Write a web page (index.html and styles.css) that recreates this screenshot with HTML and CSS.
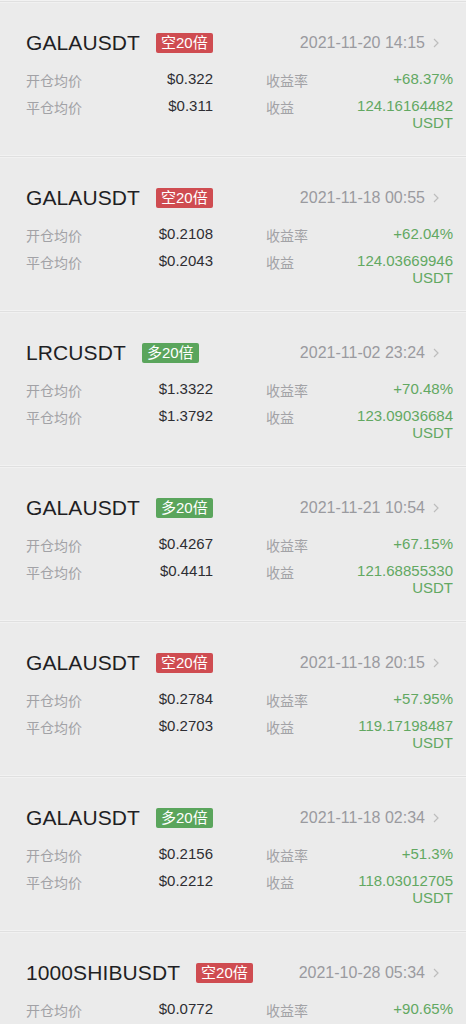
FILE: index.html
```html
<!DOCTYPE html>
<html lang="zh">
<head>
<meta charset="utf-8">
<title>订单记录</title>
<link rel="stylesheet" href="styles.css">
</head>
<body>
<div class="list">

  <div class="card">
    <div class="divider"></div>
    <div class="body">
      <div class="head">
        <span class="sym">GALAUSDT</span>
        <span class="badge short">空20倍</span>
        <span class="date">2021-11-20 14:15</span>
        <svg class="chev" width="6" height="10" viewBox="0 0 6 10"><polyline points="1,1 5,5 1,9" fill="none" stroke="#bdbdbd" stroke-width="1.2"/></svg>
      </div>
      <div class="stats">
        <div class="pair"><span class="lbl">开仓均价</span><span class="val">$0.322</span></div>
        <div class="pair"><span class="lbl">收益率</span><span class="val green">+68.37%</span></div>
        <div class="pair"><span class="lbl">平仓均价</span><span class="val">$0.311</span></div>
        <div class="pair"><span class="lbl">收益</span><span class="val green">124.16164482<br>USDT</span></div>
      </div>
    </div>
  </div>

  <div class="card">
    <div class="divider"></div>
    <div class="body">
      <div class="head">
        <span class="sym">GALAUSDT</span>
        <span class="badge short">空20倍</span>
        <span class="date">2021-11-18 00:55</span>
        <svg class="chev" width="6" height="10" viewBox="0 0 6 10"><polyline points="1,1 5,5 1,9" fill="none" stroke="#bdbdbd" stroke-width="1.2"/></svg>
      </div>
      <div class="stats">
        <div class="pair"><span class="lbl">开仓均价</span><span class="val">$0.2108</span></div>
        <div class="pair"><span class="lbl">收益率</span><span class="val green">+62.04%</span></div>
        <div class="pair"><span class="lbl">平仓均价</span><span class="val">$0.2043</span></div>
        <div class="pair"><span class="lbl">收益</span><span class="val green">124.03669946<br>USDT</span></div>
      </div>
    </div>
  </div>

  <div class="card">
    <div class="divider"></div>
    <div class="body">
      <div class="head">
        <span class="sym">LRCUSDT</span>
        <span class="badge long">多20倍</span>
        <span class="date">2021-11-02 23:24</span>
        <svg class="chev" width="6" height="10" viewBox="0 0 6 10"><polyline points="1,1 5,5 1,9" fill="none" stroke="#bdbdbd" stroke-width="1.2"/></svg>
      </div>
      <div class="stats">
        <div class="pair"><span class="lbl">开仓均价</span><span class="val">$1.3322</span></div>
        <div class="pair"><span class="lbl">收益率</span><span class="val green">+70.48%</span></div>
        <div class="pair"><span class="lbl">平仓均价</span><span class="val">$1.3792</span></div>
        <div class="pair"><span class="lbl">收益</span><span class="val green">123.09036684<br>USDT</span></div>
      </div>
    </div>
  </div>

  <div class="card">
    <div class="divider"></div>
    <div class="body">
      <div class="head">
        <span class="sym">GALAUSDT</span>
        <span class="badge long">多20倍</span>
        <span class="date">2021-11-21 10:54</span>
        <svg class="chev" width="6" height="10" viewBox="0 0 6 10"><polyline points="1,1 5,5 1,9" fill="none" stroke="#bdbdbd" stroke-width="1.2"/></svg>
      </div>
      <div class="stats">
        <div class="pair"><span class="lbl">开仓均价</span><span class="val">$0.4267</span></div>
        <div class="pair"><span class="lbl">收益率</span><span class="val green">+67.15%</span></div>
        <div class="pair"><span class="lbl">平仓均价</span><span class="val">$0.4411</span></div>
        <div class="pair"><span class="lbl">收益</span><span class="val green">121.68855330<br>USDT</span></div>
      </div>
    </div>
  </div>

  <div class="card">
    <div class="divider"></div>
    <div class="body">
      <div class="head">
        <span class="sym">GALAUSDT</span>
        <span class="badge short">空20倍</span>
        <span class="date">2021-11-18 20:15</span>
        <svg class="chev" width="6" height="10" viewBox="0 0 6 10"><polyline points="1,1 5,5 1,9" fill="none" stroke="#bdbdbd" stroke-width="1.2"/></svg>
      </div>
      <div class="stats">
        <div class="pair"><span class="lbl">开仓均价</span><span class="val">$0.2784</span></div>
        <div class="pair"><span class="lbl">收益率</span><span class="val green">+57.95%</span></div>
        <div class="pair"><span class="lbl">平仓均价</span><span class="val">$0.2703</span></div>
        <div class="pair"><span class="lbl">收益</span><span class="val green">119.17198487<br>USDT</span></div>
      </div>
    </div>
  </div>

  <div class="card">
    <div class="divider"></div>
    <div class="body">
      <div class="head">
        <span class="sym">GALAUSDT</span>
        <span class="badge long">多20倍</span>
        <span class="date">2021-11-18 02:34</span>
        <svg class="chev" width="6" height="10" viewBox="0 0 6 10"><polyline points="1,1 5,5 1,9" fill="none" stroke="#bdbdbd" stroke-width="1.2"/></svg>
      </div>
      <div class="stats">
        <div class="pair"><span class="lbl">开仓均价</span><span class="val">$0.2156</span></div>
        <div class="pair"><span class="lbl">收益率</span><span class="val green">+51.3%</span></div>
        <div class="pair"><span class="lbl">平仓均价</span><span class="val">$0.2212</span></div>
        <div class="pair"><span class="lbl">收益</span><span class="val green">118.03012705<br>USDT</span></div>
      </div>
    </div>
  </div>

  <div class="card">
    <div class="divider"></div>
    <div class="body">
      <div class="head">
        <span class="sym">1000SHIBUSDT</span>
        <span class="badge short">空20倍</span>
        <span class="date">2021-10-28 05:34</span>
        <svg class="chev" width="6" height="10" viewBox="0 0 6 10"><polyline points="1,1 5,5 1,9" fill="none" stroke="#bdbdbd" stroke-width="1.2"/></svg>
      </div>
      <div class="stats">
        <div class="pair"><span class="lbl">开仓均价</span><span class="val">$0.0772</span></div>
        <div class="pair"><span class="lbl">收益率</span><span class="val green">+90.65%</span></div>
      </div>
    </div>
  </div>

</div>
</body>
</html>
```

FILE: styles.css
```css
html, body {
  margin: 0;
  padding: 0;
  background: #ebebeb;
}

body {
  font-family: "Liberation Sans", "Noto Sans CJK SC", sans-serif;
  color: #333;
  overflow: hidden;
  height: 1024px;
}

.list {
  display: flex;
  flex-direction: column;
}

.card {
  display: flex;
  flex-direction: column;
}

.divider {
  height: 1px;
  background: #e0e0e0;
  border-top: 1px solid #f2f2f2;
  border-bottom: 1px solid #f1f1f1;
}

.body {
  padding: 26px 13px 24px 26px;
  display: flex;
  flex-direction: column;
  gap: 13px;
}

.head {
  display: flex;
  align-items: center;
  height: 28px;
  padding-right: 14px;
}

.sym {
  font-size: 21px;
  color: #1f1f24;
  letter-spacing: 0.1px;
}

.badge {
  margin-left: 16px;
  height: 20px;
  line-height: 20px;
  padding: 0 5px;
  font-size: 15px;
  color: #fff;
  border-radius: 2px;
}

.badge.short { background: #cf4c51; }
.badge.long { background: #5aa55c; }

.date {
  margin-left: auto;
  font-size: 16px;
  color: #9a9a9f;
}

.chev {
  margin-left: 8px;
}

.stats {
  display: grid;
  grid-template-columns: 1fr 1fr;
  column-gap: 53px;
  row-gap: 10px;
}

.pair {
  display: flex;
  justify-content: space-between;
  align-items: baseline;
  height: auto;
}

.lbl {
  font-size: 14px;
  color: #a2a2a6;
  font-family: "Noto Sans CJK SC", sans-serif;
  line-height: 17px;
  position: relative;
  top: 2px;
}

.val {
  font-size: 15px;
  line-height: 17px;
  color: #2e2e33;
  text-align: right;
}

.val.green {
  color: #62a862;
}
```
